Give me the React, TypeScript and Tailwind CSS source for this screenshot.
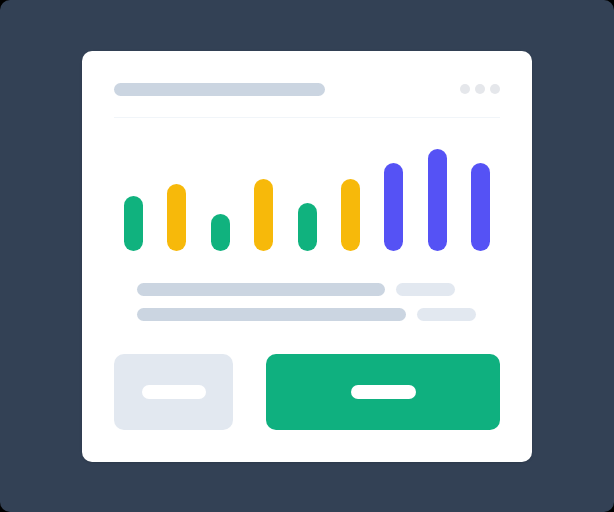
const bars = [
  { h: 55, c: "bg-[#10b27e]" },
  { h: 67, c: "bg-[#f7b90a]" },
  { h: 37, c: "bg-[#10b27e]" },
  { h: 72, c: "bg-[#f7b90a]" },
  { h: 48, c: "bg-[#10b27e]" },
  { h: 72, c: "bg-[#f7b90a]" },
  { h: 88, c: "bg-[#5552f5]" },
  { h: 102, c: "bg-[#5552f5]" },
  { h: 88, c: "bg-[#5552f5]" },
];

export default function App() {
  return (
    <div className="h-[512px] w-[614px] bg-black">
      <div className="flex h-full w-full items-center justify-center rounded-[10px] bg-[#334155]">
        <div className="flex h-[411px] w-[450px] flex-col rounded-[10px] bg-white p-8 shadow-sm">
          <div className="flex items-center justify-between">
            <div className="h-[13px] w-[211px] rounded-full bg-[#cbd5e1]" />
            <div className="flex gap-[5px]">
              <span className="h-[10px] w-[10px] rounded-full bg-[#e5e7eb]" />
              <span className="h-[10px] w-[10px] rounded-full bg-[#e5e7eb]" />
              <span className="h-[10px] w-[10px] rounded-full bg-[#e5e7eb]" />
            </div>
          </div>
          <div className="mt-[21px] h-px bg-[#f1f5f9]" />

          <div className="mt-[31px] flex h-[102px] items-end justify-between px-[10px]">
            {bars.map((b, i) => (
              <div
                key={i}
                className={`w-[19px] rounded-full ${b.c}`}
                style={{ height: b.h }}
              />
            ))}
          </div>

          <div className="mt-8 flex flex-col gap-3 pl-[23px]">
            <div className="flex items-center gap-[11px]">
              <div className="h-[13px] w-[248px] rounded-full bg-[#cbd5e1]" />
              <div className="h-[13px] w-[59px] rounded-full bg-[#e2e8f0]" />
            </div>
            <div className="flex items-center gap-[11px]">
              <div className="h-[13px] w-[269px] rounded-full bg-[#cbd5e1]" />
              <div className="h-[13px] w-[59px] rounded-full bg-[#e2e8f0]" />
            </div>
          </div>

          <div className="mt-[33px] flex gap-[33px]">
            <div className="flex h-[76px] w-[119px] items-center justify-center rounded-[10px] bg-[#e2e8f0]">
              <div className="h-[14px] w-[64px] rounded-full bg-white" />
            </div>
            <div className="flex h-[76px] flex-1 items-center justify-center rounded-[10px] bg-[#0fb07f]">
              <div className="h-[14px] w-[65px] rounded-full bg-white" />
            </div>
          </div>
        </div>
      </div>
    </div>
  );
}
